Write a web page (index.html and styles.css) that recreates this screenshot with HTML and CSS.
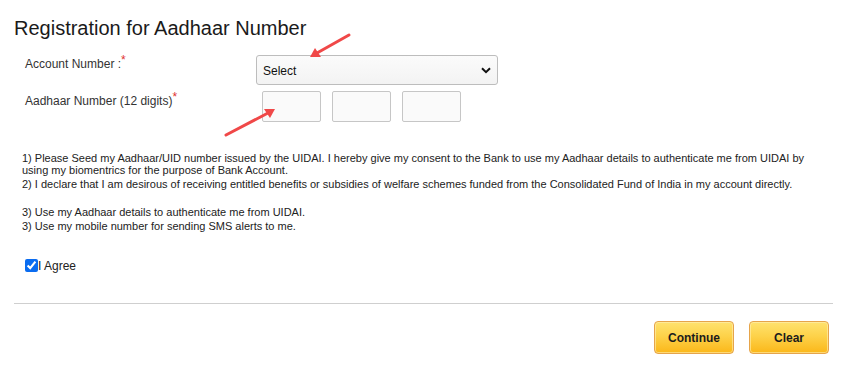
FILE: index.html
```html
<!DOCTYPE html>
<html lang="en">
<head>
<meta charset="utf-8">
<title>Registration for Aadhaar Number</title>
<link rel="stylesheet" href="styles.css">
</head>
<body>
<div class="page">
  <h1 class="title">Registration for Aadhaar Number</h1>

  <div class="form">
    <div class="row row-account">
      <label class="label">Account Number :<sup class="req">*</sup></label>
      <div class="control">
        <div class="select">
          <span class="select-text">Select</span>
          <svg class="chevron" width="10" height="7" viewBox="0 0 10 7"><path d="M1 1.2 L5 5.2 L9 1.2" fill="none" stroke="#111" stroke-width="2"/></svg>
        </div>
      </div>
    </div>
    <div class="row row-aadhaar">
      <label class="label">Aadhaar Number (12 digits)<sup class="req">*</sup></label>
      <div class="control inputs">
        <input class="digit-box" type="text">
        <input class="digit-box" type="text">
        <input class="digit-box" type="text">
      </div>
    </div>
  </div>

  <div class="consent">
    <p class="item item-first">1) Please Seed my Aadhaar/UID number issued by the UIDAI. I hereby give my consent to the Bank to use my Aadhaar details to authenticate me from UIDAI by using my biomentrics for the purpose of Bank Account.</p>
    <p class="item">2) I declare that I am desirous of receiving entitled benefits or subsidies of welfare schemes funded from the Consolidated Fund of India in my account directly.</p>
    <p class="item item-gap">3) Use my Aadhaar details to authenticate me from UIDAI.</p>
    <p class="item">3) Use my mobile number for sending SMS alerts to me.</p>
  </div>

  <div class="agree">
    <input class="agree-box" type="checkbox" checked><span class="agree-text">I Agree</span>
  </div>

  <div class="divider"></div>

  <div class="actions">
    <button class="btn">Continue</button>
    <button class="btn">Clear</button>
  </div>
</div>

<svg class="annotations" width="843" height="369" viewBox="0 0 843 369">
  <line x1="349" y1="35" x2="317" y2="53" stroke="#f04848" stroke-width="3" stroke-linecap="round"/>
  <polygon points="310,57 315,48 321,57" fill="#f04848"/>
  <line x1="226" y1="135" x2="268" y2="113" stroke="#f04848" stroke-width="3" stroke-linecap="round"/>
  <polygon points="275,109 264,109 270,118" fill="#f04848"/>
</svg>
</body>
</html>
```

FILE: styles.css
```css
* { box-sizing: border-box; }

html, body {
  margin: 0;
  padding: 0;
  background: #ffffff;
}

body {
  font-family: "Liberation Sans", Arial, sans-serif;
  color: #222;
  position: relative;
  width: 843px;
  height: 369px;
  overflow: hidden;
}

.page {
  padding: 15px 10px 0 14px;
}

.title {
  margin: 0;
  font-size: 20px;
  font-weight: normal;
  line-height: 26px;
  color: #1a1a1a;
}

.form {
  margin-top: 14px;
  padding-left: 11px;
  display: flex;
  flex-direction: column;
  gap: 6px;
}

.row {
  display: flex;
  align-items: flex-start;
}

.label {
  width: 231px;
  flex: none;
  font-size: 12px;
  color: #333;
  line-height: 14px;
}

.row-account .label { padding-top: 2px; }
.row-aadhaar .label { padding-top: 3px; }

.req {
  color: #e0322f;
  font-size: 12px;
  vertical-align: top;
  line-height: 10px;
  position: relative;
  top: -2px;
}

.select {
  width: 242px;
  height: 30px;
  border: 1px solid #bdbdbd;
  border-radius: 3px;
  background: linear-gradient(#fbfbfb, #f3f3f3);
  display: flex;
  align-items: center;
  justify-content: space-between;
  padding: 2px 5px 0 6px;
}

.select-text {
  font-size: 12px;
  color: #111;
}

.chevron { margin-right: 1px; margin-bottom: 2px; }

.inputs {
  display: flex;
  gap: 11px;
  padding-left: 6px;
}

.digit-box {
  width: 59px;
  height: 31px;
  margin: 0;
  border: 1px solid #c6c6c6;
  border-radius: 2px;
  background: #fafafa;
  font-family: inherit;
}

.consent {
  margin-top: 30px;
  padding-left: 8px;
  width: 800px;
  font-size: 11px;
  color: #222;
}

.item {
  margin: 0;
  line-height: 14px;
}

.item-first { line-height: 12px; margin-bottom: 1px; }

.item-gap { margin-top: 14px; }

.agree {
  margin-top: 25px;
  padding-left: 11px;
  display: flex;
  align-items: center;
  height: 15px;
}

.agree-box {
  margin: 0;
  width: 13px;
  height: 13px;
  accent-color: #0a6cf0;
}

.agree-text {
  font-size: 12px;
  color: #222;
}

.divider {
  margin-top: 30px;
  height: 1px;
  background: #cfcfcf;
}

.actions {
  margin-top: 17px;
  display: flex;
  justify-content: flex-end;
  gap: 15px;
  padding-right: 4px;
}

.btn {
  width: 80px;
  height: 33px;
  border: 1px solid #e6a44a;
  border-radius: 4px;
  background: linear-gradient(#ffe26e 0%, #fdd24a 45%, #fbb719 100%);
  font-family: "Liberation Sans", Arial, sans-serif;
  font-size: 12px;
  font-weight: bold;
  color: #1c1c1c;
  padding: 0;
  box-shadow: inset 0 0 0 1px rgba(255, 240, 180, 0.6);
}

.annotations {
  position: absolute;
  left: 0;
  top: 0;
  pointer-events: none;
}
```
